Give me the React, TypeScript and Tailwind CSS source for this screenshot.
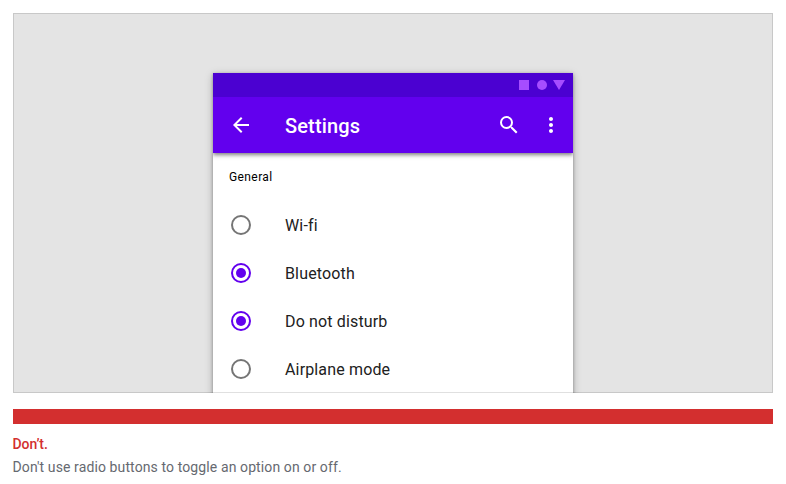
const options = [
  { label: 'Wi-fi', checked: false },
  { label: 'Bluetooth', checked: true },
  { label: 'Do not disturb', checked: true },
  { label: 'Airplane mode', checked: false },
];

function Radio({ checked }: { checked: boolean }) {
  return checked ? (
    <span className="flex size-5 shrink-0 items-center justify-center rounded-full border-2 border-[#6200ee]">
      <span className="size-2.5 rounded-full bg-[#6200ee]" />
    </span>
  ) : (
    <span className="size-5 shrink-0 rounded-full border-2 border-[#757575]" />
  );
}

function StatusBar() {
  return (
    <div className="flex h-6 items-center justify-end bg-[#4b01d1] pr-2">
      <svg width="46" height="10" viewBox="0 0 46 10" fill="#a64dff">
        <rect width="10" height="10" />
        <circle cx="23" cy="5" r="5" />
        <path d="M34 0h12l-6 10z" />
      </svg>
    </div>
  );
}

function AppBar() {
  return (
    <div className="flex h-14 items-center bg-[#6200ee] pl-4 text-white">
      <svg width="24" height="24" viewBox="0 0 24 24" fill="currentColor">
        <path d="M20 11H7.83l5.59-5.59L12 4l-8 8 8 8 1.41-1.41L7.83 13H20v-2z" />
      </svg>
      <h1 className="ml-8 pt-0.5 text-xl font-medium tracking-[0.15px]">Settings</h1>
      <div className="ml-auto flex gap-[18px] pr-2.5">
        <svg width="24" height="24" viewBox="0 0 24 24" fill="currentColor">
          <path d="M15.5 14h-.79l-.28-.27A6.471 6.471 0 0 0 16 9.5 6.5 6.5 0 1 0 9.5 16c1.61 0 3.09-.59 4.23-1.57l.27.28v.79l5 4.99L20.49 19l-4.99-5zm-6 0C7.01 14 5 11.99 5 9.5S7.01 5 9.5 5 14 7.01 14 9.5 11.99 14 9.5 14z" />
        </svg>
        <svg width="24" height="24" viewBox="0 0 24 24" fill="currentColor">
          <path d="M12 8c1.1 0 2-.9 2-2s-.9-2-2-2-2 .9-2 2 .9 2 2 2zm0 2c-1.1 0-2 .9-2 2s.9 2 2 2 2-.9 2-2-.9-2-2-2zm0 6c-1.1 0-2 .9-2 2s.9 2 2 2 2-.9 2-2-.9-2-2-2z" />
        </svg>
      </div>
    </div>
  );
}

export default function App() {
  return (
    <div className="h-[484px] w-[786px] overflow-hidden bg-white p-[13px] font-['Roboto',sans-serif]">
      <div className="relative flex h-[380px] w-[760px] justify-center overflow-hidden bg-[#e4e4e4] pt-[60px]">
        <div className="h-[640px] w-[360px] shrink-0 bg-white shadow-[0_2px_8px_rgba(0,0,0,0.25),0_1px_3px_rgba(0,0,0,0.3)]">
          <div className="overflow-hidden pb-2">
            <div className="shadow-[0_2px_4px_rgba(0,0,0,0.5)]">
              <StatusBar />
              <AppBar />
            </div>
          </div>
          <div className="-mt-2 flex h-12 items-center pl-4 text-xs tracking-[0.4px] text-black">General</div>
          {options.map((o) => (
            <div key={o.label} className="flex h-12 items-center pl-[18px]">
              <Radio checked={o.checked} />
              <span className="ml-[34px] pt-px text-base tracking-[0.15px] text-[#212121]">{o.label}</span>
            </div>
          ))}
        </div>
        <div className="pointer-events-none absolute inset-0 border border-black/12" />
      </div>
      <div className="mt-4 h-[15px] w-[760px] bg-[#d32f2f]" />
      <p className="mt-[9px] -ml-[0.5px] text-sm leading-[23px] font-medium tracking-[-0.1px] text-[#d32f2f]">Don’t.</p>
      <p className="-ml-[0.5px] text-sm leading-[23px] tracking-[0.108px] text-[#666970]">Don't use radio buttons to toggle an option on or off.</p>
    </div>
  );
}
